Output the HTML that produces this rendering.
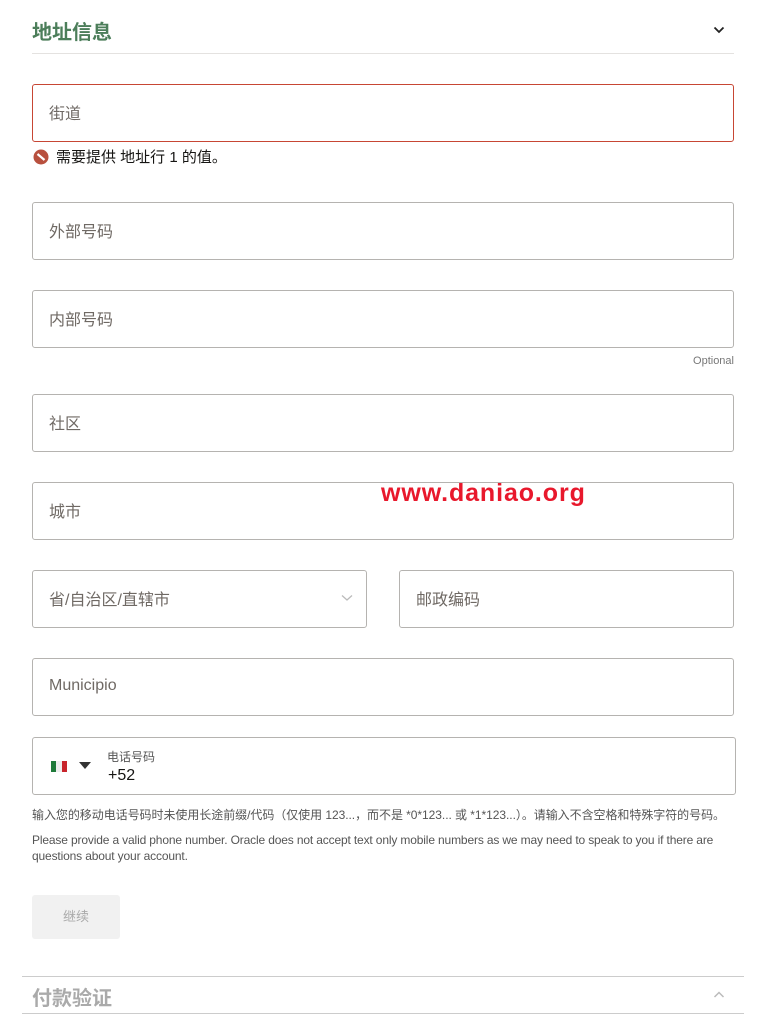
<!DOCTYPE html>
<html><head><meta charset="utf-8"><style>
body{margin:0;width:772px;height:1030px;background:#fff;font-family:"Liberation Sans","Noto Sans CJK SC",sans-serif;position:relative;overflow:hidden;color:#333}
.a{position:absolute}
.f{position:absolute;border:1px solid #b5b3b0;border-radius:3px;box-sizing:border-box;height:58px}
.f span{position:absolute;left:16px;top:15px;font-size:16px;color:#6f6964}
</style></head><body>
<div class="a" style="left:32px;top:16px;font-size:20px;font-weight:bold;color:#4c7e5a">地址信息</div>
<svg class="a" style="left:713px;top:25px" width="12" height="10" viewBox="0 0 12 10"><path d="M1.5 2.5 L6 7 L10.5 2.5" fill="none" stroke="#222" stroke-width="1.8"/></svg>
<div class="a" style="left:32px;top:53px;width:702px;height:1px;background:#e4e2e0"></div>

<div class="f" style="left:32px;top:84px;width:702px;border-color:#c74634"><span>街道</span></div>
<svg class="a" style="left:33px;top:149px" width="16" height="16" viewBox="0 0 16 16"><circle cx="8" cy="8" r="7.5" fill="#b8503e"/><path d="M4.5 5 L11.5 11" stroke="#fff" stroke-width="2.2"/></svg>
<div class="a" style="left:56px;top:146px;font-size:15px;color:#161513">需要提供 地址行 1 的值。</div>

<div class="f" style="left:32px;top:202px;width:702px"><span>外部号码</span></div>
<div class="f" style="left:32px;top:290px;width:702px"><span>内部号码</span></div>
<div class="a" style="right:38px;top:355px;font-size:11px;color:#777">Optional</div>
<div class="f" style="left:32px;top:394px;width:702px"><span>社区</span></div>
<div class="f" style="left:32px;top:482px;width:702px"><span>城市</span></div>
<div class="a" style="left:381px;top:479px;font-size:25px;font-weight:bold;color:#e8182c;letter-spacing:0.9px">www.daniao.org</div>
<div class="f" style="left:32px;top:570px;width:335px"><span>省/自治区/直辖市</span>
<svg class="a" style="left:308px;top:22px" width="12" height="10" viewBox="0 0 12 10"><path d="M1 2.5 L6 7 L11 2.5" fill="none" stroke="#bbb" stroke-width="1.3"/></svg></div>
<div class="f" style="left:399px;top:570px;width:335px"><span>邮政编码</span></div>
<div class="f" style="left:32px;top:658px;width:702px"><span style="top:18px">Municipio</span></div>

<div class="f" style="left:32px;top:737px;width:704px">
<div class="a" style="left:18px;top:23px;width:5px;height:11px;background:#1f7a3a"></div>
<div class="a" style="left:23px;top:23px;width:6px;height:11px;background:#eee"></div>
<div class="a" style="left:29px;top:23px;width:5px;height:11px;background:#c8252c"></div>
<svg class="a" style="left:46px;top:24px" width="12" height="8"><path d="M0 0 L12 0 L6 7Z" fill="#333"/></svg>
<div class="a" style="left:74px;top:10px;font-size:12px;color:#555">电话号码</div>
<div class="a" style="left:75px;top:29px;font-size:16px;color:#161513">+52</div>
</div>
<div class="a" style="left:32px;top:806px;font-size:12px;color:#555;white-space:nowrap;letter-spacing:-0.05px">输入您的移动电话号码时未使用长途前缀/代码（仅使用 123...，而不是 *0*123... 或 *1*123...）。请输入不含空格和特殊字符的号码。</div>
<div class="a" style="left:32px;top:832px;width:700px;font-size:12px;line-height:16px;color:#555;letter-spacing:-0.15px">Please provide a valid phone number. Oracle does not accept text only mobile numbers as we may need to speak to you if there are questions about your account.</div>

<div class="a" style="left:32px;top:895px;width:88px;height:44px;background:#f1f1f1;border-radius:3px;font-size:13px;color:#aaa;text-align:center;line-height:44px">继续</div>

<div class="a" style="left:22px;top:976px;width:722px;height:1px;background:#ccc"></div>
<div class="a" style="left:32px;top:982px;font-size:20px;font-weight:bold;color:#aaa">付款验证</div>
<svg class="a" style="left:713px;top:990px" width="12" height="10" viewBox="0 0 12 10"><path d="M1.5 7 L6 2.5 L10.5 7" fill="none" stroke="#bbb" stroke-width="1.5"/></svg>
<div class="a" style="left:22px;top:1013px;width:722px;height:1px;background:#ccc"></div>
</body></html>
